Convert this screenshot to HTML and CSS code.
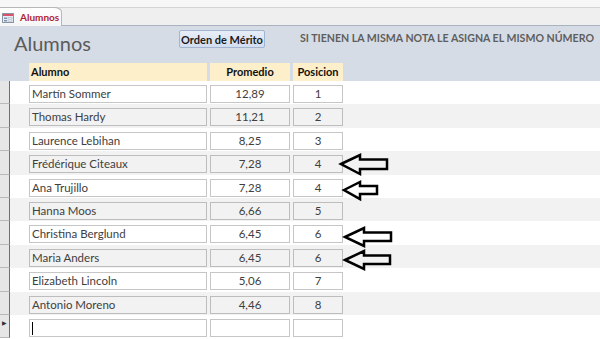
FILE: index.html
```html
<!DOCTYPE html>
<html>
<head>
  <meta charset="utf-8" />
  <title>Alumnos</title>
  <link rel="stylesheet" href="styles.css">
</head>
<body>
  <!-- Document tab strip -->
  <div class="tabbar">
    <div class="tab">
      <svg class="tab-icon" width="12" height="10" viewBox="0 0 12 10">
        <rect x="0.5" y="0.5" width="11" height="9" fill="#e9eef5" stroke="#8a96a8" />
        <rect x="1" y="1" width="10" height="2" fill="#d9536a" />
        <rect x="2" y="4.5" width="3" height="1.5" fill="#7f93b5" />
        <rect x="6" y="4.5" width="4" height="1.5" fill="#ffffff" stroke="#9aa7bb" stroke-width="0.5" />
        <rect x="2" y="7" width="3" height="1.5" fill="#7f93b5" />
        <rect x="6" y="7" width="4" height="1.5" fill="#ffffff" stroke="#9aa7bb" stroke-width="0.5" />
      </svg>
      <span>Alumnos</span>
    </div>
  </div>

  <div class="form">
    <!-- Form header -->
    <div class="form-header">
      <div class="title-row">
        <h1>Alumnos</h1>
        <button type="button">Orden de Mérito</button>
        <p class="note">SI TIENEN LA MISMA NOTA LE ASIGNA EL MISMO NÚMERO</p>
      </div>
      <div class="labels">
        <span class="lbl col-name">Alumno</span>
        <span class="lbl col-avg">Promedio</span>
        <span class="lbl col-pos">Posicion</span>
      </div>
    </div>

    <!-- Detail rows -->
    <div class="detail">
      <div class="row">
        <div class="selector"></div>
        <div class="field col-name">Martín Sommer</div>
        <div class="field col-avg">12,89</div>
        <div class="field col-pos">1</div>
      </div>
      <div class="row alt">
        <div class="selector"></div>
        <div class="field col-name">Thomas Hardy</div>
        <div class="field col-avg">11,21</div>
        <div class="field col-pos">2</div>
      </div>
      <div class="row">
        <div class="selector"></div>
        <div class="field col-name">Laurence Lebihan</div>
        <div class="field col-avg">8,25</div>
        <div class="field col-pos">3</div>
      </div>
      <div class="row alt">
        <div class="selector"></div>
        <div class="field col-name">Frédérique Citeaux</div>
        <div class="field col-avg">7,28</div>
        <div class="field col-pos">4</div>
      </div>
      <div class="row">
        <div class="selector"></div>
        <div class="field col-name">Ana Trujillo</div>
        <div class="field col-avg">7,28</div>
        <div class="field col-pos">4</div>
      </div>
      <div class="row alt">
        <div class="selector"></div>
        <div class="field col-name">Hanna Moos</div>
        <div class="field col-avg">6,66</div>
        <div class="field col-pos">5</div>
      </div>
      <div class="row">
        <div class="selector"></div>
        <div class="field col-name">Christina Berglund</div>
        <div class="field col-avg">6,45</div>
        <div class="field col-pos">6</div>
      </div>
      <div class="row alt">
        <div class="selector"></div>
        <div class="field col-name">Maria Anders</div>
        <div class="field col-avg">6,45</div>
        <div class="field col-pos">6</div>
      </div>
      <div class="row">
        <div class="selector"></div>
        <div class="field col-name">Elizabeth Lincoln</div>
        <div class="field col-avg">5,06</div>
        <div class="field col-pos">7</div>
      </div>
      <div class="row alt">
        <div class="selector"></div>
        <div class="field col-name">Antonio Moreno</div>
        <div class="field col-avg">4,46</div>
        <div class="field col-pos">8</div>
      </div>
      <!-- New record -->
      <div class="row">
        <div class="selector current">&#9654;</div>
        <div class="field col-name"><span class="caret"></span></div>
        <div class="field col-avg"></div>
        <div class="field col-pos"></div>
      </div>
    </div>

    <!-- Hand-drawn arrows pasted over the form -->
    <svg class="arrows" width="600" height="313" viewBox="0 26 600 313">
      <g fill="none" stroke="#000" stroke-width="2.5" stroke-linejoin="miter">
        <polygon points="341,164 360,155 360,159.5 387,159.5 387,169 360,169 360,174" />
        <polygon points="344,190 360,182 360,186 377,186 377,194 360,194 360,199" />
        <polygon points="345,237 364,228 364,232.5 391,232.5 391,241 364,241 364,246" />
        <polygon points="345,260 364,251 364,255.5 390,255.5 390,264 364,264 364,269" />
      </g>
    </svg>
  </div>
</body>
</html>
```

FILE: styles.css
```css
body {
  margin: 0;
  padding: 0;
  width: 600px;
  height: 339px;
  overflow: hidden;
  font-family: Lato, "Open Sans", sans-serif;
  background: #fff;
}

/* Tab strip on top */
.tabbar {
  height: 26px;
  padding-top: 7px;
  box-sizing: border-box;
  background: linear-gradient(#f7f7f7 0, #f7f7f7 7px, #d4d4d4 7px, #d4d4d4 8px, #efefef 8px);
  border-bottom: 1px solid #aab2be;
  position: relative;
}
.tab {
  display: flex;
  align-items: center;
  gap: 6px;
  width: 62px;
  height: 19px;
  padding-left: 2px;
  background: linear-gradient(#ffffff, #f4f5f7);
  border: 1px solid #b8b8b8;
  border-left: none;
  border-bottom: none;
  border-top-right-radius: 8px 5px;
  box-sizing: border-box;
}
.tab-icon {
  flex: none;
  margin-top: 1px;
}
.tab span {
  color: #b2242f;
  font-size: 10px;
  font-weight: bold;
}

/* Form */
.form {
  position: relative;
}
.form-header {
  background: #d6dce5;
  height: 55px;
  padding-top: 4px;
  box-sizing: border-box;
}
.title-row {
  display: flex;
  align-items: flex-start;
  height: 33px;
}
h1 {
  margin: 1px 0 0 14px;
  width: 165px;
  font-size: 20px;
  line-height: 24px;
  font-weight: normal;
  color: #5b5b5b;
}
button {
  width: 86px;
  height: 18px;
  padding: 0;
  font-family: inherit;
  font-size: 11px;
  font-weight: bold;
  color: #1b1b1b;
  background: linear-gradient(#e8eef8, #d2ddf0);
  border: 1px solid #a2b4d0;
  border-radius: 2px;
}
.note {
  margin: 1px 0 0 35px;
  font-size: 10.6px;
  line-height: 14px;
  font-weight: bold;
  color: #5e5e5e;
  white-space: nowrap;
}

.labels {
  display: flex;
  gap: 3px;
  padding-left: 29px;
  height: 18px;
}
.lbl {
  background: #fdefca;
  font-size: 11px;
  font-weight: bold;
  line-height: 18px;
  color: #111;
  text-align: center;
}
.labels .col-name {
  text-align: left;
  padding-left: 2px;
  box-sizing: border-box;
}

/* Column widths shared by labels and fields */
.col-name { width: 178px; }
.col-avg { width: 80px; }
.col-pos { width: 50px; }

/* Detail rows */
.row {
  display: flex;
  gap: 3px;
  height: 23.4px;
  padding-top: 4px;
  box-sizing: border-box;
  background: #fff;
}
.row.alt {
  background: #f2f2f2;
}
.selector {
  width: 10px;
  margin: -4px 16px 0 0;
  background: #e6e6e6;
  border-right: 1px solid #6f6f6f;
  border-bottom: 1px solid #b9b9b9;
  box-sizing: border-box;
  font-size: 6px;
  line-height: 16px;
  color: #333;
  padding-left: 2px;
}
.field {
  height: 18px;
  border: 1px solid #c6c6c6;
  background: #fff;
  box-sizing: border-box;
  font-size: 11.5px;
  line-height: 16px;
  color: #404040;
  text-align: center;
}
.row.alt .field {
  background: #f2f2f2;
  border-color: #bdbdbd;
}
.field.col-name {
  text-align: left;
  padding-left: 2px;
}
.caret {
  display: inline-block;
  width: 1px;
  height: 13px;
  margin-top: 2px;
  background: #000;
  vertical-align: top;
}

.arrows {
  position: absolute;
  left: 0;
  top: 0;
}
```
